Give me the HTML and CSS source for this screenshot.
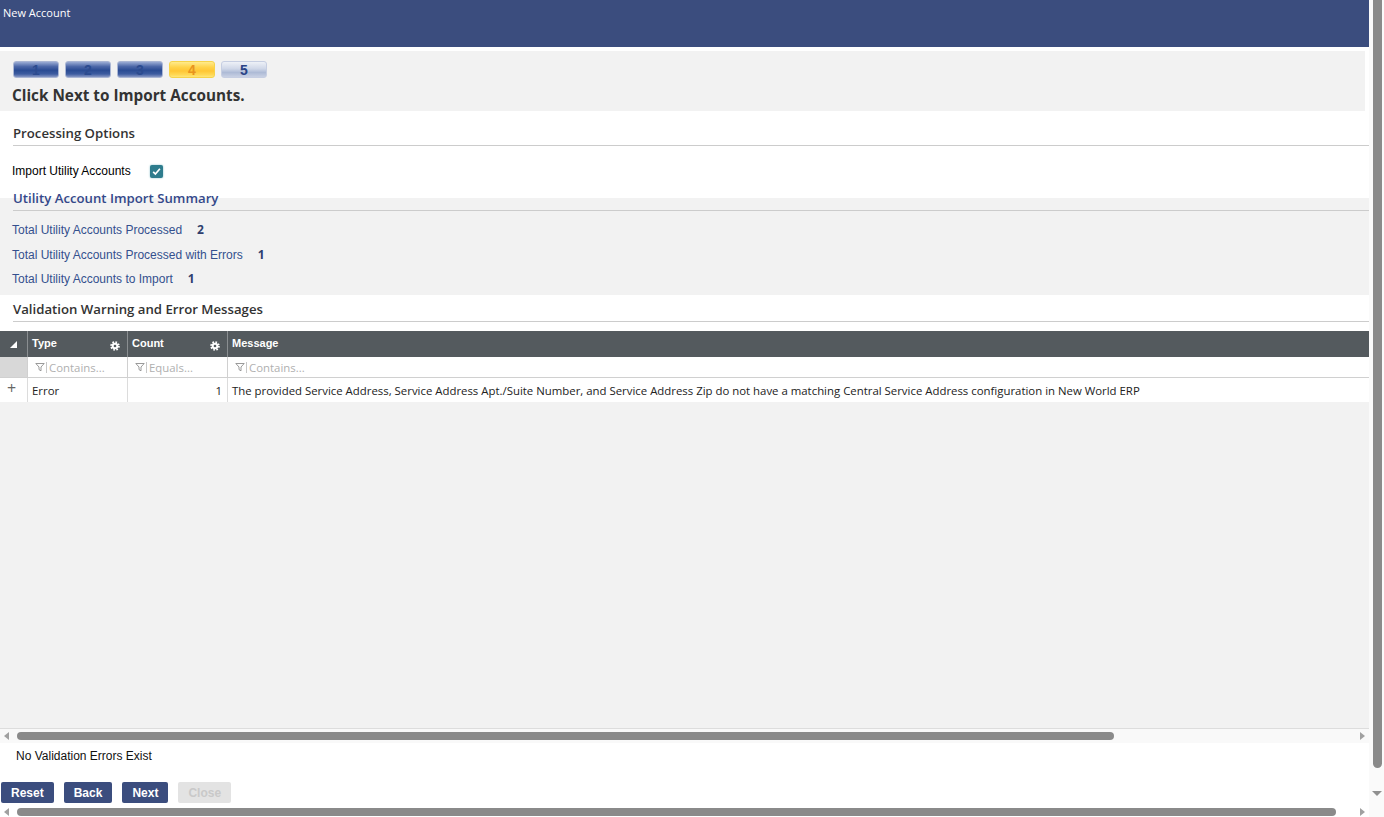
FILE: index.html
```html
<!DOCTYPE html>
<html lang="en">
<head>
    <meta charset="UTF-8">
    <title>New Account</title>
    <link rel="stylesheet" href="styles.css">
</head>
<body>
<div class="window">
    <div class="page">
        <div class="titlebar">New Account</div>

        <!-- wizard steps -->
        <div class="wizard">
            <div class="steps">
                <span class="step done">1</span>
                <span class="step done">2</span>
                <span class="step done">3</span>
                <span class="step current">4</span>
                <span class="step todo">5</span>
            </div>
            <h2>Click Next to Import Accounts.</h2>
        </div>

        <div class="section options">
            <div class="section-title">Processing Options</div>
            <div class="check-row">
                <label>Import Utility Accounts</label>
                <span class="checkbox">
                    <svg width="9" height="9" viewBox="0 0 9 9"><path d="M1.2 4.8 3.4 7 7.9 1.8" fill="none" stroke="#fff" stroke-width="1.7"/></svg>
                </span>
            </div>
        </div>

        <div class="section summary">
            <div class="section-title blue">Utility Account Import Summary</div>
            <div class="stats">
                <div class="stat"><span class="stat-label">Total Utility Accounts Processed</span><b>2</b></div>
                <div class="stat"><span class="stat-label">Total Utility Accounts Processed with Errors</span><b>1</b></div>
                <div class="stat"><span class="stat-label">Total Utility Accounts to Import</span><b>1</b></div>
            </div>
        </div>

        <div class="section validation">
            <div class="section-title">Validation Warning and Error Messages</div>
        </div>

        <!-- grid -->
        <div class="grid">
            <div class="grid-row head">
                <div class="cell c0">
                    <svg width="7" height="7" viewBox="0 0 7 7"><path d="M7 0V7H0z" fill="#fff"/></svg>
                </div>
                <div class="cell c1">Type
                    <svg class="gear" width="10" height="10" viewBox="0 0 10 10"><circle cx="5" cy="5" r="3.9" fill="none" stroke="#fff" stroke-width="1.8" stroke-dasharray="1.6 1.46"/><circle cx="5" cy="5" r="3.3" fill="#fff"/><circle cx="5" cy="5" r="1.3" fill="#545a5e"/></svg>
                </div>
                <div class="cell c2">Count
                    <svg class="gear" width="10" height="10" viewBox="0 0 10 10"><circle cx="5" cy="5" r="3.9" fill="none" stroke="#fff" stroke-width="1.8" stroke-dasharray="1.6 1.46"/><circle cx="5" cy="5" r="3.3" fill="#fff"/><circle cx="5" cy="5" r="1.3" fill="#545a5e"/></svg>
                </div>
                <div class="cell c3">Message</div>
            </div>
            <div class="grid-row filter">
                <div class="cell c0"></div>
                <div class="cell c1"><svg class="funnel" width="10" height="10" viewBox="0 0 10 10"><path d="M0.8 1.5h8.4L6 5v3.8L4 7.6V5z" fill="none" stroke="#8f8f8f" stroke-width="0.9"/></svg><span class="sep"></span>Contains...</div>
                <div class="cell c2"><svg class="funnel" width="10" height="10" viewBox="0 0 10 10"><path d="M0.8 1.5h8.4L6 5v3.8L4 7.6V5z" fill="none" stroke="#8f8f8f" stroke-width="0.9"/></svg><span class="sep"></span>Equals...</div>
                <div class="cell c3"><svg class="funnel" width="10" height="10" viewBox="0 0 10 10"><path d="M0.8 1.5h8.4L6 5v3.8L4 7.6V5z" fill="none" stroke="#8f8f8f" stroke-width="0.9"/></svg><span class="sep"></span>Contains...</div>
            </div>
            <div class="grid-row data">
                <div class="cell c0 plus">+</div>
                <div class="cell c1">Error</div>
                <div class="cell c2 num">1</div>
                <div class="cell c3">The provided Service Address, Service Address Apt./Suite Number, and Service Address Zip do not have a matching Central Service Address configuration in New World ERP</div>
            </div>
            <div class="grid-empty"></div>
            <div class="hscroll inner">
                <span class="arrow left"></span>
                <div class="track"><div class="thumb"></div></div>
                <span class="arrow right"></span>
            </div>
        </div>

        <div class="footer">
            <div class="footer-msg">No Validation Errors Exist</div>
            <div class="buttons">
                <button class="btn">Reset</button>
                <button class="btn">Back</button>
                <button class="btn">Next</button>
                <button class="btn disabled">Close</button>
            </div>
        </div>

        <div class="hscroll outer">
            <span class="arrow left"></span>
            <div class="track"><div class="thumb"></div></div>
            <span class="arrow right"></span>
        </div>
    </div>

    <div class="vscroll">
        <div class="vthumb"></div>
        <span class="arrow down"></span>
    </div>
</div>
</body>
</html>
```

FILE: styles.css
```css
body {
    margin: 0;
    overflow: hidden;
    font-family: "Liberation Sans", Arial, sans-serif;
    font-size: 12px;
    background-color: #fff;
}
.window {
    display: flex;
    height: 817px;
}
.page {
    flex: 1;
    min-width: 0;
    display: flex;
    flex-direction: column;
}
.titlebar {
    height: 47px;
    flex-shrink: 0;
    box-sizing: border-box;
    background-color: #3b4d7e;
    color: #fff;
    font-family: "Open Sans", sans-serif;
    font-size: 11px;
    padding: 5px 0 0 3px;
}
.wizard {
    height: 60px;
    flex-shrink: 0;
    box-sizing: border-box;
    margin: 4px 4px 0 0;
    padding: 10px 0 0 13px;
    background-color: #f2f2f2;
}
.steps {
    display: flex;
    gap: 6px;
}
.step {
    width: 46px;
    height: 17px;
    box-sizing: border-box;
    border-radius: 3px;
    border: 1px solid #aab6d4;
    text-align: center;
    font: bold 14px/16px "Liberation Sans", Arial, sans-serif;
}
.step.done {
    background: linear-gradient(to bottom, #9aabd4 0%, #4d68a8 30%, #2a4b93 55%, #3d5ca0 80%, #8797c4 100%);
    color: #2c4b8f;
}
.step.current {
    border-color: #f6d34a;
    background: linear-gradient(to bottom, #ffeb8c 0%, #ffd34a 35%, #ffc634 60%, #ffd955 85%, #ffe57a 100%);
    color: #e8941e;
}
.step.todo {
    border-color: #c6cee2;
    background: linear-gradient(to bottom, #eef1f7 0%, #cfd7e8 45%, #aebbd6 70%, #c9d1e4 100%);
    color: #2a4386;
}
.wizard h2 {
    margin: 7px 0 0 -1px;
    font: bold 15.3px/20px "Open Sans", sans-serif;
    color: #333;
}
.section {
    flex-shrink: 0;
    box-sizing: border-box;
}
.section-title {
    margin-left: 13px;
    padding-bottom: 3px;
    border-bottom: 1px solid #ccc;
    font: 600 13.2px/18px "Open Sans", sans-serif;
    color: #333;
}
.section-title.blue {
    color: #34488a;
}
.options {
    height: 87px;
    padding-top: 13px;
}
.check-row {
    display: flex;
    align-items: center;
    height: 20px;
    margin: 15px 0 0 12px;
}
.checkbox {
    width: 13px;
    height: 13px;
    margin-left: 19px;
    border-radius: 2px;
    background-color: #2e7c8d;
    box-shadow: 0 0 2px #7fb8c4;
    display: flex;
    align-items: center;
    justify-content: center;
}
.summary {
    height: 97px;
    background-color: #f2f2f2;
}
.summary .section-title {
    margin-top: -9px;
}
.stats {
    margin-top: 7px;
}
.stat {
    height: 24.5px;
    line-height: 24px;
    padding-left: 12px;
}
.stat-label {
    color: #34508e;
}
.stat b {
    margin-left: 15px;
    font-family: "Open Sans", sans-serif;
    color: #2f3f6e;
}
.validation {
    height: 36px;
    padding-top: 5px;
}
.grid {
    flex: 1;
    display: flex;
    flex-direction: column;
    background-color: #f2f2f2;
    font-family: "Open Sans", sans-serif;
    font-size: 11.4px;
}
.grid-row {
    display: flex;
    flex-shrink: 0;
}
.cell {
    box-sizing: border-box;
    display: flex;
    align-items: center;
    padding-left: 4px;
    border-right: 1px solid #d6d6d6;
    white-space: nowrap;
}
.c0 { width: 28px; justify-content: center; padding-left: 0; }
.c1, .c2 { width: 100px; }
.c3 { flex: 1; border-right: none; }
.head {
    height: 26px;
    background-color: #545a5e;
    color: #fff;
    font: bold 11px "Liberation Sans", Arial, sans-serif;
}
.head .cell {
    border-right-color: #8a8e91;
    align-items: flex-start;
    padding-top: 6px;
}
.head .c0 {
    padding-top: 10px;
}
.head .c1, .head .c2 {
    justify-content: space-between;
    padding-right: 7px;
}
.gear {
    margin-top: 4px;
}
.filter {
    height: 20px;
    background-color: #fff;
    color: #b0b0b0;
    border-bottom: 1px solid #d0d0d0;
}
.filter .cell {
    border-right-color: #d0d0d0;
}
.filter .c0 {
    background-color: #d8d8d8;
}
.funnel {
    margin-left: 3px;
}
.sep {
    width: 1px;
    height: 11px;
    margin: 0 2px 0 1px;
    background-color: #c8c8c8;
}
.data {
    height: 24px;
    background-color: #fff;
    color: #222;
}
.data .cell {
    border-right-color: #dcdcdc;
}
.plus {
    font-size: 16px;
    color: #666;
    padding-bottom: 4px;
    justify-content: flex-start;
    padding-left: 7px;
}
.num {
    justify-content: flex-end;
    padding-right: 5px;
}
.grid-empty {
    flex: 1;
    border-bottom: 1px solid #ddd;
}
.hscroll {
    display: flex;
    align-items: center;
    flex-shrink: 0;
}
.hscroll.inner {
    height: 14px;
    background-color: #f9f9f9;
}
.hscroll.outer {
    height: 11px;
    background-color: #fff;
}
.track {
    flex: 1;
}
.thumb {
    height: 8px;
    border-radius: 4px;
    background-color: #8a8a8a;
}
.inner .thumb { width: 1097px; }
.outer .thumb { width: 1319px; }
.arrow {
    width: 17px;
    display: flex;
    justify-content: center;
}
.arrow.right { width: 14px; }
.arrow.left::before,
.arrow.right::before {
    content: "";
    border-top: 4px solid transparent;
    border-bottom: 4px solid transparent;
}
.arrow.left::before { border-right: 5px solid #a0a0a0; margin-right: 4px; }
.arrow.right::before { border-left: 5px solid #a0a0a0; }
.footer {
    height: 63px;
    flex-shrink: 0;
    box-sizing: border-box;
    padding-top: 6px;
}
.footer-msg {
    line-height: 14px;
    padding-left: 16px;
    color: #111;
}
.buttons {
    display: flex;
    gap: 10px;
    margin: 19px 0 0 1px;
}
.btn {
    height: 21px;
    padding: 0 10px;
    border: none;
    border-radius: 2px;
    background-color: #3b4d7e;
    color: #fff;
    font: bold 12px "Liberation Sans", Arial, sans-serif;
}
.btn.disabled {
    background-color: #e3e3e3;
    color: #c9c9c9;
}
.vscroll {
    width: 15px;
    display: flex;
    flex-direction: column;
    align-items: center;
    background-color: #fafafa;
}
.vthumb {
    width: 9px;
    height: 768px;
    margin-left: 1px;
    border-radius: 0 0 5px 5px;
    background-color: #8a8a8a;
}
.arrow.down {
    margin-top: 23px;
}
.arrow.down::before {
    content: "";
    border-left: 5px solid transparent;
    border-right: 5px solid transparent;
    border-top: 5px solid #909090;
}
```
